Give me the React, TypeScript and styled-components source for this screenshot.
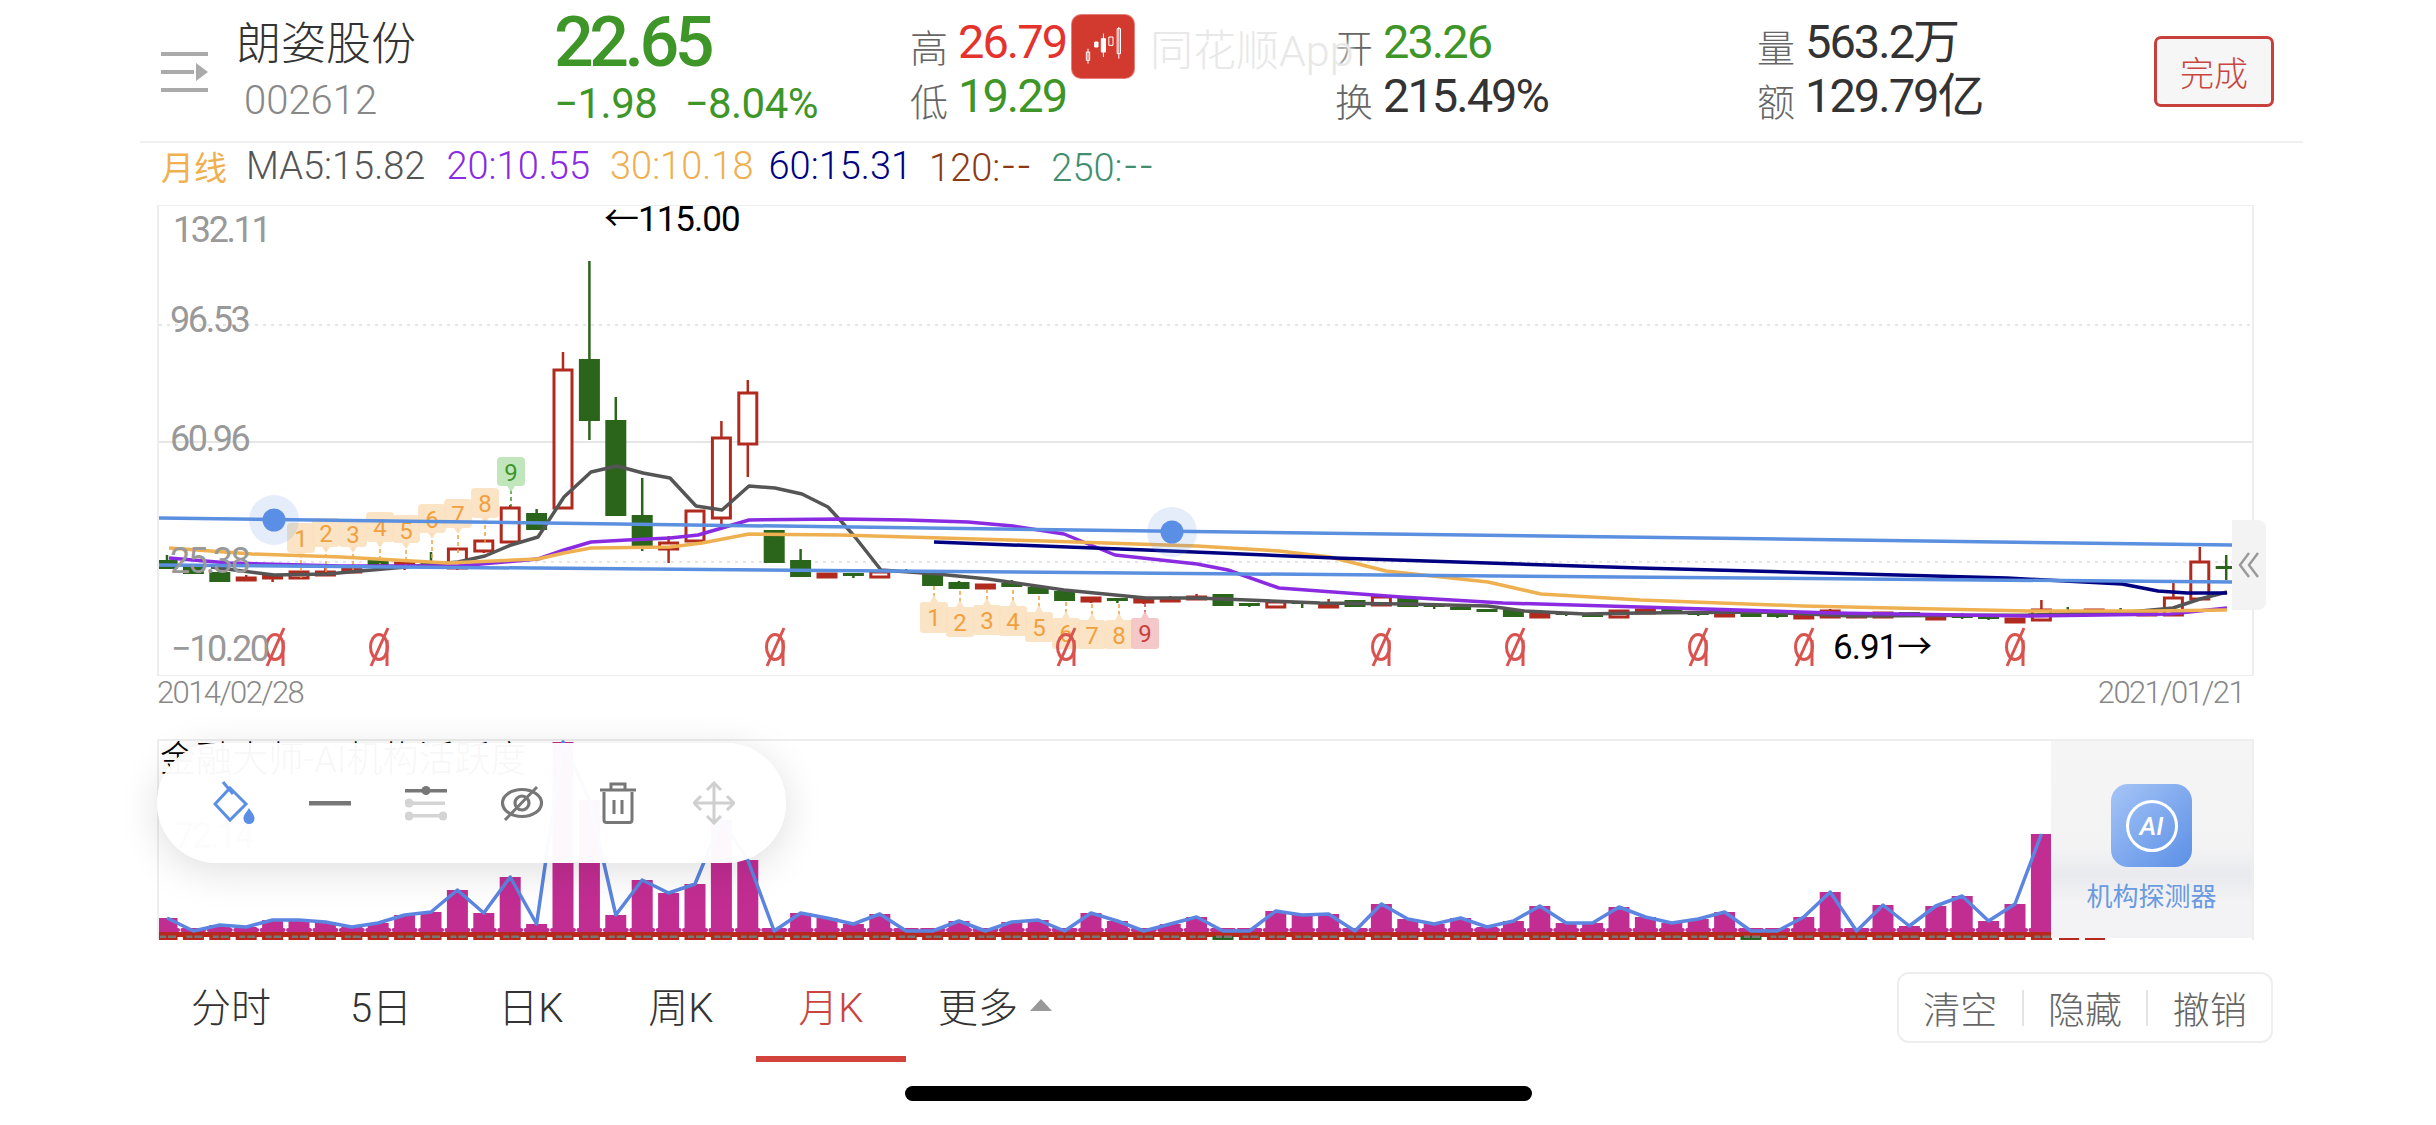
import styled, { createGlobalStyle } from 'styled-components';

type Candle = ['r' | 'g', number, number, number, number]

const SANS = `Roboto, "Noto Sans CJK SC", sans-serif`

const GlobalStyle = createGlobalStyle`
  html, body {
    margin: 0;
    background: #fff;
    font-family: ${SANS};
    overflow: hidden;
  }
`

const candleX = (i: number) => 167 + 26.4 * i

// [colour, body top, body bottom, wick top, wick bottom], one per month
const candles: Candle[] = [
  ['g', 560, 569, 555, 569], ['g', 565, 574, 565, 574], ['g', 572, 582, 569, 582], ['r', 578, 580, 575, 580],
  ['r', 576, 578, 576, 582], ['r', 572, 578, 572, 578], ['r', 572, 575, 568, 575], ['r', 569, 572, 569, 572],
  ['g', 560, 565, 560, 565], ['r', 563, 566, 563, 570], ['g', 561, 565, 552, 569], ['r', 549, 568, 549, 570],
  ['r', 541, 551, 541, 553], ['r', 508, 542, 505, 542], ['g', 513, 530, 509, 530], ['r', 370, 508, 352, 508],
  ['g', 359, 421, 261, 440], ['g', 420, 516, 397, 516], ['g', 515, 547, 478, 551], ['r', 543, 549, 536, 563],
  ['r', 511, 541, 511, 541], ['r', 438, 518, 421, 525], ['r', 393, 444, 380, 477], ['g', 530, 563, 530, 563],
  ['g', 560, 577, 549, 577], ['r', 574, 577, 574, 577], ['g', 573, 576, 573, 578], ['r', 572, 577, 572, 577],
  ['g', 570, 572, 569, 572], ['g', 573, 586, 573, 586], ['g', 582, 589, 581, 589], ['r', 585, 588, 585, 588],
  ['g', 583, 587, 580, 587], ['g', 587, 594, 587, 594], ['g', 591, 601, 591, 601], ['r', 598, 601, 597, 603],
  ['g', 598, 601, 598, 603], ['r', 599, 602, 599, 604], ['r', 599, 601, 596, 601], ['r', 597, 599, 594, 599],
  ['g', 594, 606, 594, 606], ['g', 603, 606, 603, 607], ['r', 602, 607, 602, 607], ['g', 602, 604, 602, 608],
  ['r', 604, 607, 599, 607], ['g', 600, 607, 600, 607], ['r', 597, 605, 597, 605], ['g', 598, 607, 598, 607],
  ['g', 604, 607, 604, 609], ['g', 607, 610, 606, 610], ['g', 609, 612, 609, 612], ['g', 610, 617, 610, 617],
  ['r', 614, 617, 610, 617], ['g', 613, 615, 613, 616], ['g', 613, 617, 613, 617], ['r', 611, 617, 611, 617],
  ['r', 610, 613, 609, 613], ['g', 609, 613, 609, 613], ['g', 613, 615, 612, 616], ['r', 613, 616, 613, 616],
  ['g', 612, 617, 611, 617], ['g', 614, 617, 614, 618], ['r', 616, 618, 616, 618], ['r', 611, 617, 609, 617],
  ['r', 615, 617, 615, 617], ['r', 613, 617, 613, 617], ['g', 612, 617, 612, 617], ['r', 617, 619, 617, 620],
  ['g', 615, 618, 613, 619], ['g', 617, 619, 616, 620], ['r', 619, 622, 619, 622], ['r', 610, 620, 600, 620],
  ['g', 610, 612, 607, 612], ['r', 610, 612, 609, 612], ['g', 611, 616, 608, 616], ['r', 613, 615, 613, 615],
  ['r', 598, 615, 583, 615], ['r', 562, 599, 547, 599], ['g', 566, 569, 555, 580],
]

const volumeTops = [
  918, 929, 925, 927, 920, 920, 922, 927, 923, 915, 912, 890, 913, 877, 924, 742, 800, 915, 880, 893, 884, 820, 860, 928,
  913, 918, 924, 914, 928, 928, 921, 928, 922, 920, 928, 913, 921, 928, 924, 917, 928, 928, 911, 915, 914, 928, 904, 919,
  924, 918, 927, 921, 906, 923, 923, 907, 917, 923, 919, 912, 928, 928, 917, 892, 928, 905, 926, 906, 896, 921, 904, 834,
]

const ma5 = '211,567 274,575 327,574 406,567 458,562 485,556 511,545 538,537 564,497 591,472 617,466 643,473 670,478 696,506 722,510 749,486 775,488 802,494 828,507 840,520 855,537 881,570 937,574 988,579 1064,590 1146,598 1197,598 1248,600 1320,603 1406,604 1488,606 1524,611 1585,614 1640,613 1762,612 1852,616 2028,615 2130,612 2173,608 2200,599 2227,592'
const ma20 = '169,558 229,563 341,566 458,566 538,559 564,550 591,542 627,540 670,538 698,535 722,528 749,520 840,519 906,520 968,522 1013,526 1064,534 1115,555 1197,564 1228,570 1279,588 1401,597 1503,603 1640,607 1832,613 2028,616 2170,614 2227,608'
const ma30 = '169,548 252,554 341,557 448,563 538,559 564,553 591,548 670,547 702,543 749,534 840,535 1044,541 1197,546 1279,551 1330,557 1386,571 1488,582 1541,594 1640,600 1803,606 2028,611 2150,611 2227,610'
const ma60 = '934,542 1146,550 1335,558 1640,568 2007,578 2122,584 2158,591 2187,593 2227,593'

const upperMarks = [
  [301, 523, 553], [326, 518, 547], [353, 519, 547], [380, 512, 542], [406, 515, 543], [432, 504, 533], [458, 499, 528], [485, 488, 518],
]
const lowerMarks = [
  [934, 603, 633], [960, 608, 637], [987, 606, 635], [1013, 607, 636], [1039, 613, 642], [1066, 619, 649], [1092, 621, 649], [1119, 621, 649],
]
const signalXs = [275, 379, 775, 1066, 1381, 1515, 1698, 1804, 2015]

const tabs = ['分时', '5日', '日K', '周K', '月K']

const MenuGlyph = () => (
  <svg width="47" height="40" viewBox="0 0 47 40" fill="#aaa">
    <rect x="0" y="0" width="47" height="4" />
    <rect x="0" y="18" width="33" height="4" />
    <path d="M35 11 L47 20 L35 29 Z" />
    <rect x="0" y="36" width="47" height="4" />
  </svg>
)

const BucketIcon = () => (
  <svg width="42" height="44" viewBox="0 0 42 44" fill="none" stroke="#5b8fe6" strokeWidth="3">
    <path d="M10 1 L20 13" />
    <path d="M17 7 L33 23 L17 39 L2 23 Z" />
    <path d="M36 27 C33 32 30.5 34 30.5 37.5 A5.5 5.5 0 0 0 41.5 37.5 C41.5 34 39 32 36 27 Z" fill="#5b8fe6" stroke="none" />
  </svg>
)

const LineIcon = () => (
  <svg width="42" height="44" viewBox="0 0 42 44">
    <rect x="0" y="20" width="42" height="4.5" fill="#777" />
  </svg>
)

const LevelsIcon = () => (
  <svg width="42" height="44" viewBox="0 0 42 44">
    <rect x="0" y="8" width="42" height="3.5" fill="#777" />
    <circle cx="21" cy="9.5" r="4.5" fill="#777" />
    <rect x="2" y="20.5" width="38" height="3.5" fill="#d4d4d4" />
    <circle cx="4" cy="22" r="4.5" fill="#d4d4d4" />
    <rect x="2" y="33" width="38" height="3.5" fill="#d4d4d4" />
    <circle cx="4" cy="35" r="4.5" fill="#d4d4d4" />
    <circle cx="38" cy="35" r="4.5" fill="#d4d4d4" />
  </svg>
)

const HideIcon = () => (
  <svg width="42" height="44" viewBox="0 0 42 44" fill="none" stroke="#777" strokeWidth="3.2">
    <ellipse cx="21" cy="22" rx="19.5" ry="13.5" />
    <circle cx="21" cy="22" r="7" />
    <path d="M36 6 L4 39" strokeWidth="3" />
  </svg>
)

const TrashIcon = () => (
  <svg width="42" height="44" viewBox="0 0 42 44" fill="none" stroke="#777" strokeWidth="3">
    <path d="M3 9 H39" />
    <path d="M14 8 V3 H28 V8" />
    <path d="M7 11 V39 A2.5 2.5 0 0 0 9.5 41.5 H32.5 A2.5 2.5 0 0 0 35 39 V11" />
    <path d="M17 19 V33 M25 19 V33" />
  </svg>
)

const MoveIcon = () => (
  <svg width="42" height="44" viewBox="0 0 42 44" fill="none" stroke="#cfcfcf" strokeWidth="3">
    <path d="M21 2 V42 M1 22 H41" />
    <path d="M14 9 L21 2 L28 9 M14 35 L21 42 L28 35 M8 15 L1 22 L8 29 M34 15 L41 22 L34 29" />
  </svg>
)

const AppLogo = () => (
  <LogoBox>
    <svg width="50" height="40" viewBox="0 0 50 48" fill="#fff" stroke="#fff" strokeWidth="1.2">
      <path d="M5 30 H9 V40 H5 Z M7 26 V44" fill="none" />
      <path d="M15 18 H19 V24 H15 Z" />
      <path d="M23 14 H28 V30 H23 Z M25.5 8 V36" />
      <path d="M32 12 H37 V22 H32 Z" fill="none" />
      <path d="M42 2 H46 V32 H42 Z M44 0 V38" fill="none" />
    </svg>
  </LogoBox>
)

const Page = () => (
  <Shell>
    <GlobalStyle />
    <Header>
      <MenuButton><MenuGlyph /></MenuButton>
      <NameColumn>
        <StockName>朗姿股份</StockName>
        <StockCode>002612</StockCode>
      </NameColumn>
      <PriceColumn>
        <Price>22.65</Price>
        <ChangeRow>
          <span>−1.98</span>
          <span>−8.04%</span>
        </ChangeRow>
      </PriceColumn>
      <QuoteColumn $width={425}>
        <QuoteRow><QuoteLabel>高</QuoteLabel><QuoteValue $color="#e5322d">26.79</QuoteValue></QuoteRow>
        <QuoteRow><QuoteLabel>低</QuoteLabel><QuoteValue $color="#3f9628">19.29</QuoteValue></QuoteRow>
      </QuoteColumn>
      <QuoteColumn $width={422}>
        <QuoteRow><QuoteLabel>开</QuoteLabel><QuoteValue $color="#3f9628">23.26</QuoteValue></QuoteRow>
        <QuoteRow><QuoteLabel>换</QuoteLabel><QuoteValue>215.49%</QuoteValue></QuoteRow>
      </QuoteColumn>
      <QuoteColumn $width={397}>
        <QuoteRow><QuoteLabel>量</QuoteLabel><QuoteValue>563.2万</QuoteValue></QuoteRow>
        <QuoteRow><QuoteLabel>额</QuoteLabel><QuoteValue>129.79亿</QuoteValue></QuoteRow>
      </QuoteColumn>
      <DoneButton>完成</DoneButton>
      <Watermark>
        <AppLogo />
        <WatermarkText>同花顺App</WatermarkText>
      </Watermark>
    </Header>

    <LegendRow>
      <PeriodLabel>月线</PeriodLabel>
      <LegendItem $color="#555" $gap={21}>MA5:15.82</LegendItem>
      <LegendItem $color="#8a2be2" $gap={20}>20:10.55</LegendItem>
      <LegendItem $color="#eeb050" $gap={15}>30:10.18</LegendItem>
      <LegendItem $color="#000080" $gap={17}>60:15.31</LegendItem>
      <LegendItem $color="#8b3a15" $gap={18}>120:<Dashes>--</Dashes></LegendItem>
      <LegendItem $color="#3f8f6f" $gap={0}>250:<Dashes>--</Dashes></LegendItem>
    </LegendRow>

    <ChartFrame>
      <ChartSvg width="2093" height="469" viewBox="159 206 2093 469">
        <GridLine x1="159" x2="2252" y1="325" y2="325" strokeDasharray="3 5" />
        <GridLine x1="159" x2="2252" y1="442" y2="442" />
        <GridLine x1="159" x2="2252" y1="562" y2="562" strokeDasharray="3 5" />

        {candles.map(([kind, top, bottom, wickTop, wickBottom], i) => {
          const x = candleX(i)
          const color = kind === 'r' ? '#b02a1e' : '#2a651b'
          return (
            <g key={i}>
              <line x1={x} x2={x} y1={wickTop} y2={wickBottom} stroke={color} strokeWidth="2.5" />
              {kind === 'r'
                ? <rect x={x - 9} y={top} width="18" height={Math.max(bottom - top, 1)} fill="#fff" stroke={color} strokeWidth="3" />
                : <rect x={Math.max(x - 10.5, 159)} y={top} width={x - 10.5 < 159 ? 18.5 : 21} height={bottom - top} fill={color} />}
            </g>
          )
        })}

        {upperMarks.map(([x, top, bottom], i) => (
          <g key={i}>
            <line x1={x} x2={x} y1={bottom} y2={bottom + 25} stroke="#f0a040" strokeWidth="1.5" strokeDasharray="4 3" />
            <MarkShape d={`M${x - 14} ${top + 4} q0 -4 4 -4 h20 q4 0 4 4 v${bottom - top - 8} q0 4 -4 4 h-6 l-4 6 l-4 -6 h-6 q-4 0 -4 -4 Z`} fill="#fae0bd" />
            <MarkText x={x} y={top + 24} fill="#f0a040">{i + 1}</MarkText>
          </g>
        ))}
        <line x1="511" x2="511" y1="490" y2="506" stroke="#3f9628" strokeWidth="1.5" strokeDasharray="4 3" />
        <MarkShape d="M497 461 q0 -4 4 -4 h20 q4 0 4 4 v21 q0 4 -4 4 h-6 l-4 6 l-4 -6 h-6 q-4 0 -4 -4 Z" fill="#b9e2b3" />
        <MarkText x={511} y={481} fill="#3f9628">9</MarkText>

        {lowerMarks.map(([x, top, bottom], i) => (
          <g key={i}>
            <line x1={x} x2={x} y1={top - 17} y2={top - 4} stroke="#f0a040" strokeWidth="1.5" strokeDasharray="4 3" />
            <MarkShape d={`M${x - 14} ${top + 2} q0 -3 3 -3 h7 l4 -7 l4 7 h7 q3 0 3 3 v${bottom - top - 5} q0 3 -3 3 h-22 q-3 0 -3 -3 Z`} fill="#fae0bd" />
            <MarkText x={x} y={top + 23} fill="#f0a040">{i + 1}</MarkText>
          </g>
        ))}
        <line x1="1145" x2="1145" y1="603" y2="614" stroke="#c8403c" strokeWidth="1.5" strokeDasharray="4 3" />
        <MarkShape d="M1131 621 q0 -3 3 -3 h7 l4 -7 l4 7 h7 q3 0 3 3 v25 q0 3 -3 3 h-22 q-3 0 -3 -3 Z" fill="#f2c0c0" />
        <MarkText x={1145} y={642} fill="#c8403c">9</MarkText>

        <MaLine points={ma5} stroke="#555" />
        <MaLine points={ma20} stroke="#8a2be2" />
        <MaLine points={ma30} stroke="#eeb050" />
        <MaLine points={ma60} stroke="#000080" />

        <line x1="159" x2="2232" y1="518" y2="545" stroke="#5b8fe0" strokeWidth="3.5" />
        <line x1="159" x2="2232" y1="565" y2="582" stroke="#5b8fe0" strokeWidth="3.5" />
        <circle cx="274" cy="520" r="25" fill="#5b8fe6" fillOpacity=".16" />
        <circle cx="274" cy="520" r="11.5" fill="#5b8fe6" />
        <circle cx="1172" cy="532" r="25" fill="#5b8fe6" fillOpacity=".16" />
        <circle cx="1172" cy="532" r="11.5" fill="#5b8fe6" />

        {signalXs.map(x => (
          <g key={x} fill="none" stroke="#d9534f" strokeWidth="3">
            <ellipse cx={x} cy={647} rx="8.5" ry="12.5" />
            <path d={`M${x - 8} 666 L${x + 9} 628 M${x + 8} 640 L${x + 8} 666`} />
          </g>
        ))}

        <AxisText x="173" y="242">132.11</AxisText>
        <AxisText x="170" y="332">96.53</AxisText>
        <AxisText x="170" y="451">60.96</AxisText>
        <AxisText x="170" y="573">25.38</AxisText>
        <AxisText x="171" y="661">−10.20</AxisText>
        <ExtremeText x="604" y="231">←115.00</ExtremeText>
        <ExtremeText x="1833" y="659">6.91→</ExtremeText>
      </ChartSvg>
      <CollapseTab>
        <svg width="22" height="28" viewBox="0 0 22 28" fill="none" stroke="#999" strokeWidth="2.4">
          <path d="M11 2 L2 14 L11 26 M20 2 L11 14 L20 26" />
        </svg>
      </CollapseTab>
    </ChartFrame>

    <DateRow>
      <span>2014/02/28</span>
      <span>2021/01/21</span>
    </DateRow>

    <VolumeFrame>
      <ChartSvg width="2093" height="199" viewBox="159 741 2093 199">
        {volumeTops.map((top, i) => {
          const x = candleX(i)
          const left = Math.max(x - 10.5, 159)
          return (
            <g key={i}>
              <rect x={left} y={top} width={x + 10.5 - left} height={932 - top} fill="#c22d92" />
              <rect x={Math.max(x - 13, 159)} y="928" width={x + 13 - Math.max(x - 13, 159)} height="4" rx="2" fill="#c22d92" />
            </g>
          )
        })}
        <rect x="159" y="932" width="1893" height="5" fill="#b8281c" />
        {volumeTops.map((_, i) => {
          const x = candleX(i)
          const left = Math.max(x - 10.5, 159)
          return (
            <g key={i}>
              <rect x={left} y="936" width={x + 10.5 - left} height="4" fill={i === 40 || i === 60 ? '#2a651b' : '#b8281c'} />
              <rect x={x - 7} y="935.5" width="6" height="2.5" fill="#777" />
              <rect x={x + 1} y="935.5" width="8" height="2.5" fill="#777" />
            </g>
          )
        })}
        <rect x="2059" y="938" width="20" height="2" fill="#b8281c" />
        <rect x="2085" y="938" width="20" height="2" fill="#b8281c" />
        <MaLine
          points={volumeTops.map((top, i) => `${candleX(i)},${top >= 928 ? 931 : top}`).join(' ')}
          stroke="#5b85e0"
        />
        <PanelTitle x="160" y="772">金融大师-AI机构活跃度</PanelTitle>
        <AxisText x="174" y="848">72.14</AxisText>
      </ChartSvg>

      <DrawToolbar>
        <ToolSlot><BucketIcon /></ToolSlot>
        <ToolSlot><LineIcon /></ToolSlot>
        <ToolSlot><LevelsIcon /></ToolSlot>
        <ToolSlot><HideIcon /></ToolSlot>
        <ToolSlot><TrashIcon /></ToolSlot>
        <ToolSlot><MoveIcon /></ToolSlot>
      </DrawToolbar>

      <DetectorCard>
        <DetectorIcon>
          <DetectorRing>AI</DetectorRing>
        </DetectorIcon>
        <DetectorLabel>机构探测器</DetectorLabel>
      </DetectorCard>
    </VolumeFrame>

    <BottomBar>
      <TabList>
        {tabs.map(t => <Tab key={t} $active={t === '月K'}>{t}</Tab>)}
        <Tab $offset={28}>更多<MoreCaret /></Tab>
      </TabList>
      <ActionGroup>
        <ActionButton>清空</ActionButton>
        <ActionButton>隐藏</ActionButton>
        <ActionButton>撤销</ActionButton>
      </ActionGroup>
    </BottomBar>

    <HomeIndicator />
  </Shell>
)

export default function App() {
  return <Page />
}

const Shell = styled.div`
  width: 2436px;
  height: 1125px;
  padding-left: 140px;
  box-sizing: border-box;
  position: relative;
  overflow: hidden;
  background: #fff;
`

const Header = styled.header`
  width: 2163px;
  height: 143px;
  box-sizing: border-box;
  padding-left: 21px;
  border-bottom: 2px solid #f0f0f0;
  display: flex;
  align-items: flex-start;
  position: relative;
`

const MenuButton = styled.div`
  width: 75px;
  flex: none;
  padding-top: 52px;
  display: flex;
`

const NameColumn = styled.div`
  width: 318px;
  flex: none;
  padding-top: 19px;
`

const StockName = styled.div`
  font-size: 45px;
  line-height: 52px;
  color: #333;
  font-weight: 300;
`

const StockCode = styled.div`
  font-size: 40px;
  line-height: 48px;
  margin: 6px 0 0 8px;
  color: #888;
  font-weight: 300;
`

const PriceColumn = styled.div`
  width: 356px;
  flex: none;
  color: #3f9628;
`

const Price = styled.div`
  font-size: 70px;
  line-height: 84px;
  font-weight: 500;
  letter-spacing: -4.5px;
`

const ChangeRow = styled.div`
  display: flex;
  gap: 27px;
  font-size: 42px;
  line-height: 46px;
  margin-top: -3px;
  letter-spacing: -.5px;
`

const QuoteColumn = styled.div<{ $width: number }>`
  width: ${p => p.$width}px;
  flex: none;
  padding-top: 18px;
  display: flex;
  flex-direction: column;
`

const QuoteRow = styled.div`
  display: flex;
  align-items: center;
  height: 54px;
  gap: 10px;
`

const QuoteLabel = styled.span`
  font-size: 38px;
  color: #666;
  font-weight: 300;
`

const QuoteValue = styled.span<{ $color?: string }>`
  font-size: 47px;
  line-height: 54px;
  margin-top: -6px;
  letter-spacing: -2px;
  color: ${p => p.$color || '#333'};
`

const DoneButton = styled.div`
  width: 120px;
  height: 71px;
  margin-top: 36px;
  box-sizing: border-box;
  border: 3px solid #c8403c;
  border-radius: 7px;
  background: #f6f6f6;
  color: #c94540;
  font-size: 34px;
  display: flex;
  align-items: center;
  justify-content: center;
  font-weight: 300;
`

const Watermark = styled.div`
  position: absolute;
  left: 932px;
  top: 15px;
  display: flex;
  align-items: center;
  gap: 16px;
`

const LogoBox = styled.div`
  width: 62px;
  height: 63px;
  border-radius: 9px;
  background: #d23a30;
  box-shadow: 0 0 0 1px #e87f78;
  display: flex;
  align-items: center;
  justify-content: center;
`

const WatermarkText = styled.span`
  font-size: 43px;
  color: #e8e8e8;
  font-weight: 300;
  text-shadow: 0 0 6px #fff, 0 0 6px #fff;
`

const LegendRow = styled.div`
  display: flex;
  align-items: center;
  height: 46px;
  margin-left: 21px;
`

const PeriodLabel = styled.span`
  font-size: 33px;
  color: #f0b050;
  margin-right: 19px;
`

const LegendItem = styled.span<{ $color: string; $gap: number }>`
  font-size: 38px;
  font-weight: 300;
  color: ${p => p.$color};
  margin-right: ${p => p.$gap}px;
`

const Dashes = styled.span`
  font-size: 1.15em;
  letter-spacing: 3px;
  margin-left: 2px;
`

const ChartFrame = styled.div`
  position: relative;
  margin: 16px 0 0 17px;
  width: 2097px;
  height: 471px;
  box-sizing: border-box;
  border: 1px solid #eee;
  border-width: 1px 2px 1px 2px;
`

const ChartSvg = styled.svg`
  display: block;
  overflow: visible;
`

const GridLine = styled.line`
  stroke: #e6e6e6;
  stroke-width: 2;
`

const MaLine = styled.polyline`
  fill: none;
  stroke-width: 3.5;
  stroke-linejoin: round;
`

const MarkShape = styled.path`
  fill-opacity: .88;
`

const MarkText = styled.text`
  font-family: ${SANS};
  font-size: 24px;
  text-anchor: middle;
`

const AxisText = styled.text`
  font-family: ${SANS};
  font-size: 36px;
  fill: #999;
  letter-spacing: -2.4px;
`

const ExtremeText = styled.text`
  font-family: ${SANS};
  font-size: 35px;
  fill: #000;
  letter-spacing: -1px;
`

const PanelTitle = styled.text`
  font-family: ${SANS};
  font-size: 36px;
  fill: #000;
  font-weight: 300;
`

const CollapseTab = styled.div`
  position: absolute;
  right: -14px;
  top: 314px;
  width: 34px;
  height: 90px;
  background: #f3f3f3;
  border-radius: 0 8px 8px 0;
  display: flex;
  align-items: center;
  justify-content: center;
`

const DateRow = styled.div`
  width: 2087px;
  margin-left: 17px;
  height: 63px;
  display: flex;
  justify-content: space-between;
  font-size: 31px;
  line-height: 34px;
  letter-spacing: -1.6px;
  color: #888;
  font-weight: 300;
`

const VolumeFrame = styled.div`
  position: relative;
  margin-left: 17px;
  width: 2097px;
  height: 201px;
  box-sizing: border-box;
  border-top: 2px solid #eee;
  border-left: 2px solid #eee;
  border-right: 2px solid #eee;
`

const DrawToolbar = styled.div`
  position: absolute;
  left: -2px;
  top: 2px;
  width: 629px;
  height: 120px;
  box-sizing: border-box;
  padding-left: 29px;
  border-radius: 60px;
  background: rgba(255, 255, 255, .97);
  box-shadow: 0 8px 40px rgba(0, 0, 0, .13);
  display: flex;
  align-items: center;
`

const ToolSlot = styled.div`
  width: 96px;
  flex: none;
  display: flex;
  justify-content: center;
`

const DetectorCard = styled.div`
  position: absolute;
  right: 0;
  top: 0;
  width: 201px;
  height: 197px;
  background: linear-gradient(180deg, #f5f5f6 0%, #f3f3f4 55%, #e9eaee 68%, #f3f3f5 82%);
  display: flex;
  flex-direction: column;
  align-items: center;
  padding-top: 43px;
  box-sizing: border-box;
`

const DetectorIcon = styled.div`
  width: 81px;
  height: 83px;
  border-radius: 17px;
  background: linear-gradient(135deg, #a6c5f6, #5b8fe6);
  display: flex;
  align-items: center;
  justify-content: center;
`

const DetectorRing = styled.div`
  width: 52px;
  height: 52px;
  box-sizing: border-box;
  border: 3px solid #fff;
  border-radius: 50%;
  color: #fff;
  font-size: 26px;
  font-style: italic;
  font-weight: 500;
  display: flex;
  align-items: center;
  justify-content: center;
`

const DetectorLabel = styled.div`
  margin-top: 15px;
  font-size: 26px;
  line-height: 30px;
  color: #6a9ae0;
`

const BottomBar = styled.div`
  margin-left: 16px;
  width: 2117px;
  height: 122px;
  display: flex;
  justify-content: space-between;
`

const TabList = styled.div`
  display: flex;
`

const Tab = styled.div<{ $active?: boolean; $offset?: number }>`
  width: 150px;
  height: 122px;
  box-sizing: border-box;
  padding: 14px 0 0 ${p => p.$offset || 0}px;
  display: flex;
  align-items: center;
  justify-content: center;
  gap: 12px;
  font-size: 40px;
  font-weight: 300;
  white-space: nowrap;
  color: ${p => (p.$active ? '#c94540' : '#333')};
  border-bottom: 6px solid ${p => (p.$active ? '#d2433c' : 'transparent')};
`

const MoreCaret = styled.i`
  flex: none;
  width: 0;
  height: 0;
  border-left: 11px solid transparent;
  border-right: 11px solid transparent;
  border-bottom: 12px solid #999;
`

const ActionGroup = styled.div`
  width: 376px;
  height: 71px;
  margin-top: 32px;
  box-sizing: border-box;
  border: 2px solid #eee;
  border-radius: 12px;
  display: flex;
  align-items: center;
`

const ActionButton = styled.div`
  flex: 1;
  height: 36px;
  display: flex;
  align-items: center;
  justify-content: center;
  font-size: 37px;
  font-weight: 300;
  color: #666;

  & + & {
    border-left: 2px solid #e4e4e4;
  }
`

const HomeIndicator = styled.div`
  position: absolute;
  left: 905px;
  top: 1086px;
  width: 627px;
  height: 15px;
  border-radius: 8px;
  background: #000;
`
